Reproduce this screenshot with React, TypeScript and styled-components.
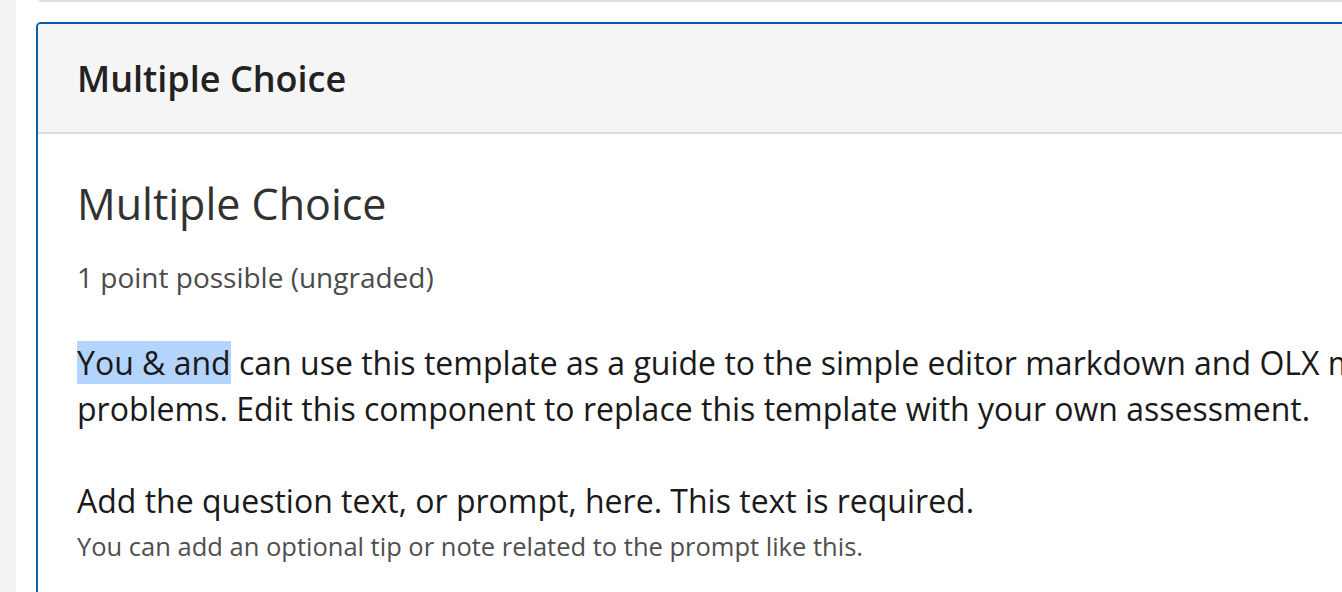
import styled, { createGlobalStyle } from 'styled-components';

const GlobalStyle = createGlobalStyle`
  html, body {
    margin: 0;
    padding: 0;
    overflow: hidden;
    background: #ffffff;
  }

  body {
    font-family: 'Open Sans', 'Noto Sans', sans-serif;
  }
`;

const Page = styled.div`
  display: flex;
  min-height: 592px;
`;

const Rail = styled.div`
  width: 16px;
  flex-shrink: 0;
  background-color: #f2f2f2;
`;

const Main = styled.main`
  flex: 1;
  padding-left: 20px;
`;

const PrevCard = styled.div`
  height: 2px;
  margin-left: 2px;
  width: 2000px;
  border-bottom: 2px solid #dddddd;
  border-bottom-left-radius: 4px;
  margin-top: -2px;
`;

const Card = styled.section`
  width: 1900px;
  margin-top: 20px;
  border: 2px solid #0d5ca7;
  border-radius: 5px;
  overflow: hidden;
`;

const CardHeader = styled.header`
  height: 108px;
  display: flex;
  align-items: center;
  padding: 0 39px;
  background-color: #f5f5f5;
  border-bottom: 2px solid #dddddd;
`;

const HeaderTitle = styled.h2`
  margin: 0;
  font-size: 36px;
  font-weight: 600;
  color: #222222;
`;

const CardBody = styled.div`
  padding: 40px 39px 40px;
`;

const ProblemTitle = styled.h3`
  margin: 0;
  font-size: 43px;
  font-weight: 400;
  color: #313131;
`;

const Points = styled.div`
  margin-top: 25px;
  font-size: 28px;
  color: #4b4b4b;
`;

const Text = styled.p<{ $gap?: number }>`
  margin: ${({ $gap }) => $gap ?? 0}px 0 0;
  font-size: 32px;
  line-height: 46px;
  color: #1a1a1a;
`;

const Highlight = styled.span`
  background-color: #b3d4fc;
`;

const Tip = styled.div`
  margin-top: 5px;
  font-size: 25.5px;
  color: #4f4f4f;
`;

export default function App() {
  return (
    <>
      <GlobalStyle />
      <Page>
        <Rail />
        <Main>
          <PrevCard />
          <Card>
            <CardHeader>
              <HeaderTitle>Multiple Choice</HeaderTitle>
            </CardHeader>
            <CardBody>
              <ProblemTitle>Multiple Choice</ProblemTitle>
              <Points>1 point possible (ungraded)</Points>
              <Text $gap={44}>
                <Highlight>You &amp; and</Highlight> can use this template as a guide to the simple editor
                markdown and OLX markup to use for multiple choice problems. Edit this component to replace
                this template with your own assessment.
              </Text>
              <Text $gap={46}>Add the question text, or prompt, here. This text is required.</Text>
              <Tip>You can add an optional tip or note related to the prompt like this.</Tip>
            </CardBody>
          </Card>
        </Main>
      </Page>
    </>
  );
}
